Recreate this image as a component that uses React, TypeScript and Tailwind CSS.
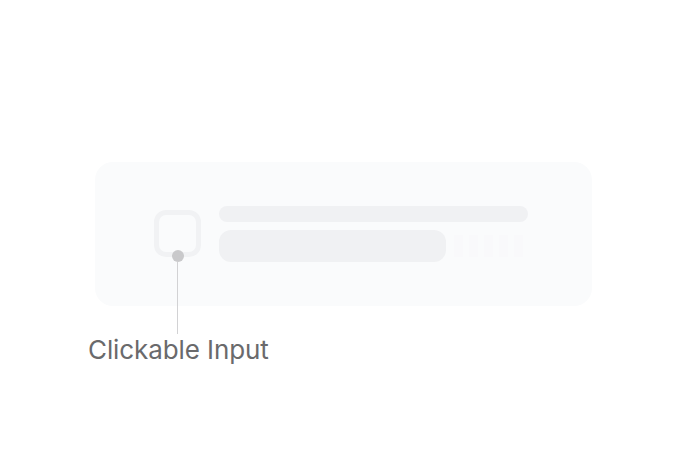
import React from "react";

const App = () => {
  return (
    <div className="w-[688px] h-[468px] bg-white relative overflow-hidden font-['Inter',sans-serif]">
      <div className="pt-[162px] pl-[95px]">
        <div className="w-[497px] h-[144px] rounded-[18px] bg-[#fafbfc] flex items-start pt-[44px] pl-[59px]">
          <div className="relative mt-[4px] w-[47px] h-[47px] rounded-[12px] border-[5px] border-[#f1f2f4] bg-[#fafbfc]">
            {/* annotation pin */}
            <div className="absolute left-1/2 -translate-x-1/2 top-[35px] w-[12px] h-[12px] rounded-full bg-[#c9c9cb]" />
          </div>
          <div className="ml-[18px] flex flex-col gap-[8px]">
            <div className="w-[309px] h-[16px] rounded-full bg-[#f0f1f3]" />
            <div className="flex items-center">
              <div className="w-[227px] h-[32px] rounded-[12px] bg-[#f0f1f3]" />
              <div className="ml-[8px] flex gap-[6px] h-[22px]">
                <div className="w-[9px] bg-[#f8f9fa]/60" />
                <div className="w-[9px] bg-[#f8f9fa]/60" />
                <div className="w-[9px] bg-[#f8f9fa]/60" />
                <div className="w-[9px] bg-[#f8f9fa]/60" />
                <div className="w-[9px] bg-[#f8f9fa]/60" />
              </div>
            </div>
          </div>
        </div>
      </div>
      <div className="absolute left-[177px] top-[262px] w-px h-[72px] bg-[#d2d2d4]" />
      <p className="mt-[28px] pl-[88px] text-[26px] leading-[32px] tracking-[-0.1px] text-[#6a6a6c]">
        Clickable Input
      </p>
    </div>
  );
};

export default App;
